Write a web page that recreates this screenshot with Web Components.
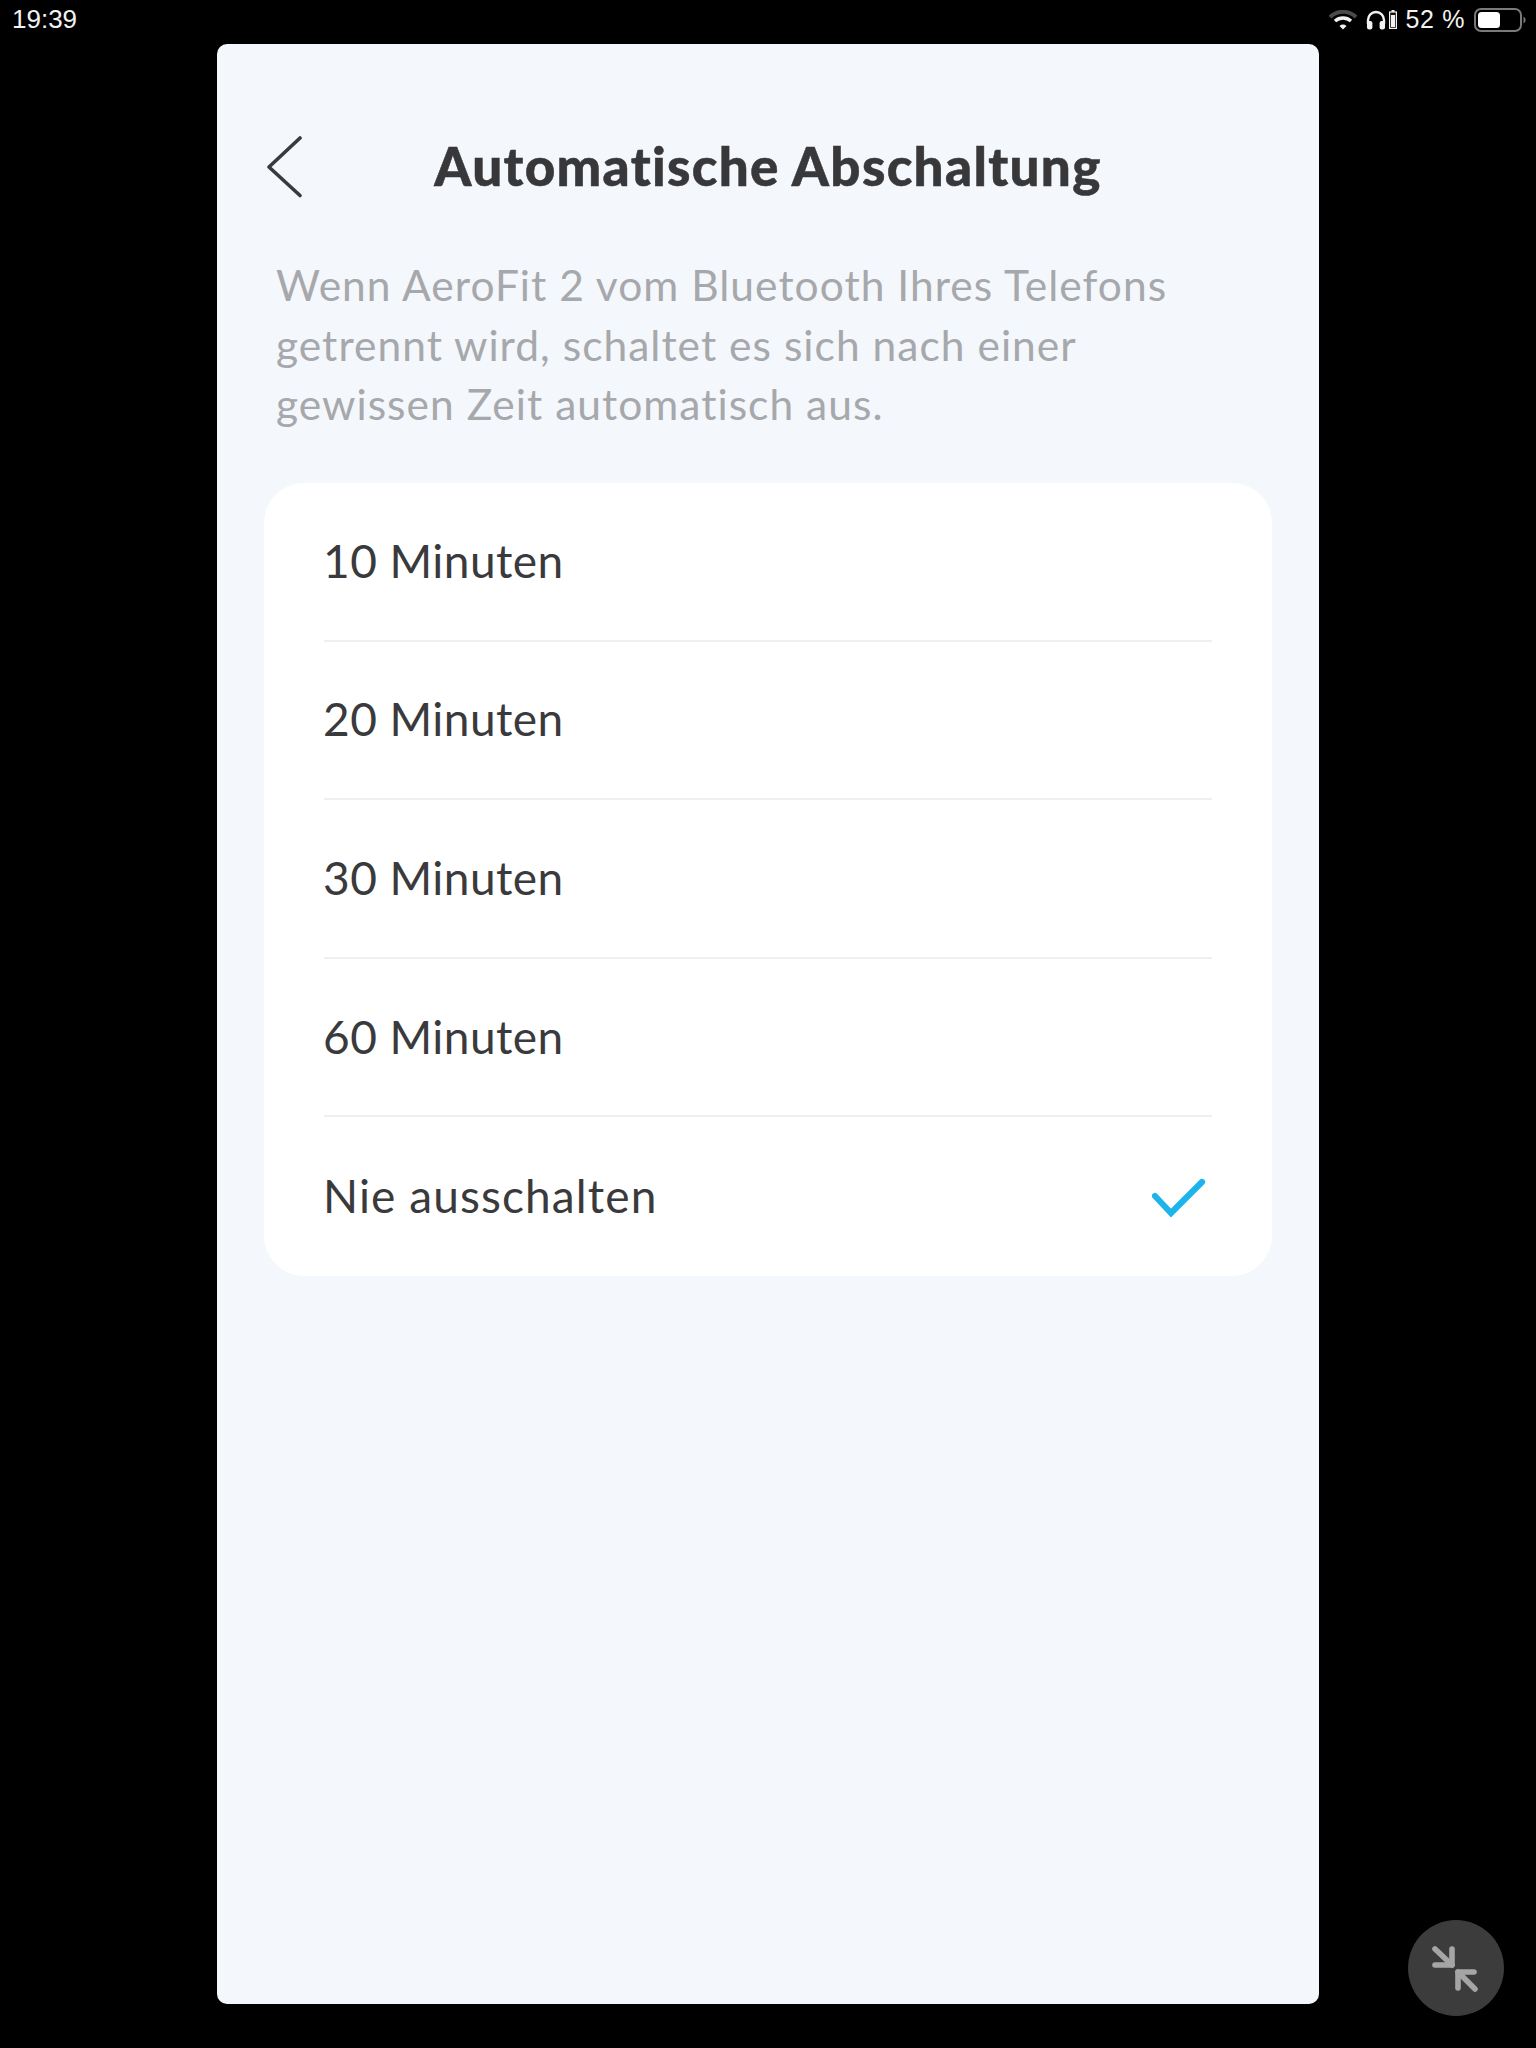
<!DOCTYPE html>
<html lang="de">
<head>
<meta charset="utf-8">
<title>Automatische Abschaltung</title>
<style>
    html, body { margin: 0; padding: 0; background: #000; }
    body { width: 1536px; height: 2048px; position: relative; overflow: hidden; font-family: Lato, "Liberation Sans", sans-serif; }
</style>
</head>
<body>
<status-bar time="19:39" level="52 %"></status-bar>
<settings-page heading="Automatische Abschaltung">
    <span slot="intro">Wenn AeroFit 2 vom Bluetooth Ihres Telefons<br>getrennt wird, schaltet es sich nach einer<br>gewissen Zeit automatisch aus.</span>
    <option-row>10 Minuten</option-row>
    <option-row>20 Minuten</option-row>
    <option-row>30 Minuten</option-row>
    <option-row>60 Minuten</option-row>
    <option-row selected last>Nie ausschalten</option-row>
</settings-page>
<float-button></float-button>

<script>
class StatusBar extends HTMLElement {
    constructor() {
        super();
        this.attachShadow({ mode: 'open' });
        this.shadowRoot.innerHTML = `
            <style>
            :host {
                display: flex;
                justify-content: space-between;
                align-items: center;
                height: 44px;
                box-sizing: border-box;
                padding: 0 10px 5px 12px;
                color: #f2f2f2;
                font-family: "Liberation Sans", Arial, sans-serif;
                font-size: 25px;
            }
            .time { font-size: 26px; }
            .right { display: flex; align-items: center; }
            svg { display: block; }
            .wifi { margin-right: 9px; }
            .phones { margin-right: 3px; }
            .small { margin-right: 9px; }
            .level { margin-right: 9px; letter-spacing: 0.6px; }
            </style>
            <span class="time"></span>
            <div class="right">
                <svg class="wifi" width="28" height="20" viewBox="0 0 28 20">
                    <path d="M1 7 A19 19 0 0 1 27 7" fill="none" stroke="#4a4a4a" stroke-width="4"/>
                    <path d="M6 11 A12 12 0 0 1 22 11" fill="none" stroke="#f2f2f2" stroke-width="3.4"/>
                    <path d="M10.5 16 A5.5 5.5 0 0 1 17.5 16 L14 19.5 Z" fill="#f2f2f2"/>
                </svg>
                <svg class="phones" width="20" height="20" viewBox="0 0 20 20">
                    <path d="M2 14 V10 A8 8 0 0 1 18 10 V14" fill="none" stroke="#f2f2f2" stroke-width="2.4"/>
                    <rect x="1" y="11" width="5.4" height="8.5" rx="2.2" fill="#f2f2f2"/>
                    <rect x="13.6" y="11" width="5.4" height="8.5" rx="2.2" fill="#f2f2f2"/>
                </svg>
                <svg class="small" width="8" height="19" viewBox="0 0 8 19">
                    <rect x="2.5" y="0" width="3" height="2" fill="#f2f2f2"/>
                    <rect x="0.6" y="2" width="6.8" height="16.4" fill="#111" stroke="#f2f2f2" stroke-width="1.2"/>
                    <rect x="2" y="5" width="4" height="12" fill="#f2f2f2"/>
                </svg>
                <span class="level"></span>
                <svg width="52" height="24" viewBox="0 0 52 24">
                    <rect x="1" y="1" width="46" height="22" rx="6" fill="none" stroke="#7a7a7a" stroke-width="2"/>
                    <rect x="4" y="4" width="22" height="16" rx="3.5" fill="#fff"/>
                    <path d="M49.5 8.5 A4 4 0 0 1 49.5 15.5 Z" fill="#7a7a7a"/>
                </svg>
            </div>
        `;
    }

    connectedCallback() {
        this.shadowRoot.querySelector('.time').textContent = this.getAttribute('time');
        this.shadowRoot.querySelector('.level').textContent = this.getAttribute('level');
    }
}

class SettingsPage extends HTMLElement {
    constructor() {
        super();
        this.attachShadow({ mode: 'open' });
        this.shadowRoot.innerHTML = `
            <style>
            :host {
                display: block;
                box-sizing: border-box;
                width: 1102px;
                height: 1960px;
                margin-left: 217px;
                padding: 0 47px;
                background: #f4f7fc;
                border-radius: 10px;
            }
            header {
                display: flex;
                align-items: center;
                height: 181px;
                padding-top: 64px;
                box-sizing: border-box;
            }
            header svg { display: block; margin-left: 3px; }
            h1 {
                flex: 1;
                margin: 0 0 2px;
                text-align: center;
                font: 900 53px Lato, sans-serif;
                color: #38383a;
                letter-spacing: 1.3px;
                -webkit-text-stroke: 0.5px #38383a;
                padding-right: 39px;
            }
            .intro {
                margin: 0;
                padding: 30px 0 0 12px;
                font: 400 42.5px/59.5px Lato, sans-serif;
                color: #a6a8ab;
                letter-spacing: 1.03px;
                white-space: nowrap;
            }
            .card {
                margin-top: 49.5px;
                background: #fff;
                border-radius: 40px;
                width: 1008px;
            }
            </style>
            <header>
                <svg width="36" height="64" viewBox="0 0 36 64">
                    <path d="M33 3 L2 32 L33 60.500" fill="none" stroke="#3a3a3c" stroke-width="3.6" stroke-linecap="round" stroke-linejoin="round"/>
                </svg>
                <h1></h1>
            </header>
            <p class="intro"><slot name="intro"></slot></p>
            <div class="card"><slot></slot></div>
        `;
    }

    connectedCallback() {
        this.shadowRoot.querySelector('h1').textContent = this.getAttribute('heading');
    }
}

class OptionRow extends HTMLElement {
    constructor() {
        super();
        this.attachShadow({ mode: 'open' });
        this.shadowRoot.innerHTML = `
            <style>
            :host { display: block; padding: 0 60px; }
            .row {
                display: flex;
                justify-content: space-between;
                align-items: center;
                box-sizing: border-box;
                height: 158.6px;
                border-bottom: 2px solid #eeeff1;
                font: 400 46px Lato, sans-serif;
                color: #3a3a3c;
                letter-spacing: 0.45px;
            }
            :host([last]) .row { border-bottom: none; letter-spacing: 1.1px; }
            span { margin: -2px 0 0 -1px; }
            svg { display: none; margin: 2px 6px 0 0; }
            :host([selected]) svg { display: block; }
            </style>
            <div class="row">
                <span><slot></slot></span>
                <svg width="54" height="42" viewBox="0 0 54 42">
                    <path d="M3 19 L19 36 L50 5" fill="none" stroke="#1cb4ea" stroke-width="6.2" stroke-linecap="round" stroke-linejoin="miter"/>
                </svg>
            </div>
        `;
    }
}

class FloatButton extends HTMLElement {
    constructor() {
        super();
        this.attachShadow({ mode: 'open' });
        this.shadowRoot.innerHTML = `
            <style>
            :host {
                position: absolute;
                left: 1408px;
                top: 1920px;
                width: 96px;
                height: 96px;
                border-radius: 50%;
                background: #3c3c3c;
                display: flex;
                align-items: center;
                justify-content: center;
            }
            </style>
            <svg width="96" height="96" viewBox="0 0 96 96">
                <g fill="none" stroke="#a5a5a5" stroke-width="5.6" stroke-linecap="round" stroke-linejoin="round">
                    <path d="M27 29 L44 45"/>
                    <path d="M44 29 V45 H27"/>
                    <path d="M67 69 L50 52"/>
                    <path d="M50 68 V52 H66"/>
                </g>
            </svg>
        `;
    }
}

customElements.define('status-bar', StatusBar);
customElements.define('settings-page', SettingsPage);
customElements.define('option-row', OptionRow);
customElements.define('float-button', FloatButton);
</script>
</body>
</html>
